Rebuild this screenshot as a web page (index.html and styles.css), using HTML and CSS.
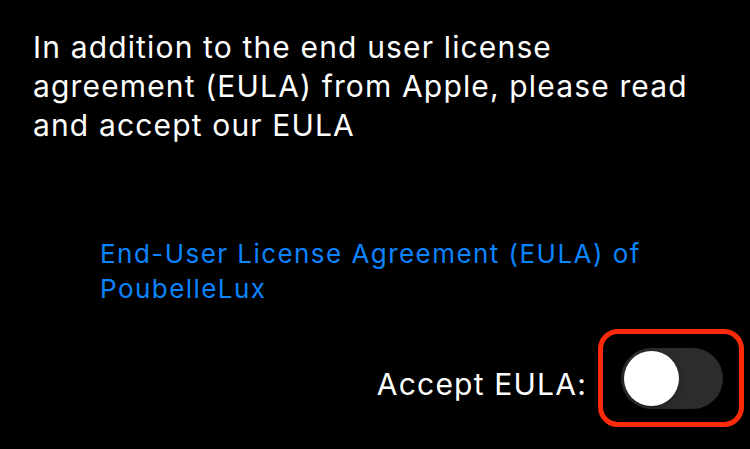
FILE: index.html
```html
<!DOCTYPE html>
<html>
<head>
<meta charset="utf-8">
<link rel="stylesheet" href="styles.css">
</head>
<body>
<main class="screen">
  <p class="intro">In addition to the end user license<br>agreement (EULA) from Apple, please read<br>and accept our EULA</p>
  <a class="eula-link" href="#">End-User License Agreement (EULA) of<br>PoubelleLux</a>
  <div class="accept-row">
    <span class="accept-label">Accept EULA:</span>
    <div class="highlight">
      <div class="switch"><div class="knob"></div></div>
    </div>
  </div>
</main>
</body>
</html>
```
FILE: styles.css
```css
html, body {
  margin: 0;
  padding: 0;
  background: #000;
}
.screen {
  width: 750px;
  height: 449px;
  background: #000;
  color: #fff;
  font-family: "Inter", "Roboto", sans-serif;
  display: flex;
  flex-direction: column;
  overflow: hidden;
}
.intro {
  margin: 0;
  padding: 28px 0 0 33px;
  font-size: 30px;
  line-height: 39px;
  letter-spacing: 1.15px;
}
.eula-link {
  display: block;
  margin: 91px 0 0 100px;
  color: #0a84ff;
  text-decoration: none;
  font-size: 26px;
  line-height: 35px;
  letter-spacing: 1.45px;
}
.accept-row {
  display: flex;
  justify-content: flex-end;
  align-items: center;
  margin-top: 23px;
  padding-right: 6px;
  gap: 11px;
}
.accept-label {
  font-size: 30px;
  letter-spacing: 1.2px;
  margin-top: 11px;
}
.highlight {
  width: 146px;
  height: 98px;
  box-sizing: border-box;
  border: 5px solid #ff2a0a;
  border-radius: 20px;
  display: flex;
  align-items: center;
  padding-left: 18px;
}
.switch {
  width: 102px;
  height: 61px;
  border-radius: 31px;
  background: #2c2c2e;
  display: flex;
  align-items: center;
  padding-left: 3px;
  box-sizing: border-box;
}
.knob {
  width: 55px;
  height: 55px;
  border-radius: 50%;
  background: #fff;
  box-shadow: 0 2px 6px rgba(0,0,0,0.3);
}
```
